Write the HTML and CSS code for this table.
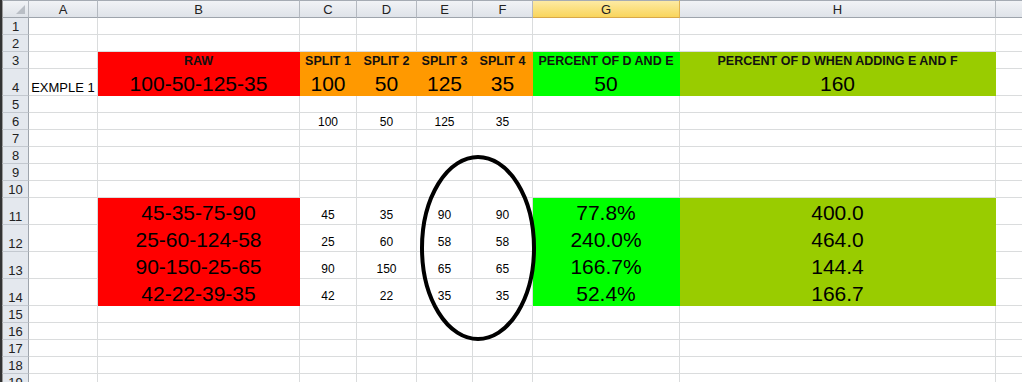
FILE: index.html
```html
<!DOCTYPE html>
<html lang="en">
<head>
  <meta charset="UTF-8">
  <title>Split values</title>
  <link rel="stylesheet" href="styles.css">
</head>
<body>

<div class="window">
  <div class="sheet">
    <!-- column headers -->
    <div class="corner"></div>
    <div class="ch">A</div><div class="ch">B</div><div class="ch">C</div><div class="ch">D</div><div class="ch">E</div><div class="ch">F</div><div class="ch sel">G</div><div class="ch">H</div><div class="ch"></div>

    <div class="rh">1</div>
    <div class="c"></div><div class="c"></div><div class="c"></div><div class="c"></div><div class="c"></div><div class="c"></div><div class="c"></div><div class="c"></div><div class="c"></div>

    <div class="rh">2</div>
    <div class="c"></div><div class="c"></div><div class="c"></div><div class="c"></div><div class="c"></div><div class="c"></div><div class="c"></div><div class="c"></div><div class="c"></div>

    <div class="rh">3</div>
    <div class="c"></div>
    <div class="c red head">RAW</div>
    <div class="c orange head">SPLIT 1</div>
    <div class="c orange head">SPLIT 2</div>
    <div class="c orange head">SPLIT 3</div>
    <div class="c orange head">SPLIT 4</div>
    <div class="c lime head">PERCENT OF D AND E</div>
    <div class="c olive head">PERCENT OF D WHEN ADDING E AND F</div>
    <div class="c"></div>

    <div class="rh">4</div>
    <div class="c label">EXMPLE 1</div>
    <div class="c red big">100-50-125-35</div>
    <div class="c orange big">100</div>
    <div class="c orange big">50</div>
    <div class="c orange big">125</div>
    <div class="c orange big">35</div>
    <div class="c lime big">50</div>
    <div class="c olive big">160</div>
    <div class="c"></div>

    <div class="rh">5</div>
    <div class="c"></div><div class="c"></div><div class="c"></div><div class="c"></div><div class="c"></div><div class="c"></div><div class="c"></div><div class="c"></div><div class="c"></div>

    <div class="rh">6</div>
    <div class="c"></div><div class="c"></div>
    <div class="c">100</div><div class="c">50</div><div class="c">125</div><div class="c">35</div>
    <div class="c"></div><div class="c"></div><div class="c"></div>

    <div class="rh">7</div>
    <div class="c"></div><div class="c"></div><div class="c"></div><div class="c"></div><div class="c"></div><div class="c"></div><div class="c"></div><div class="c"></div><div class="c"></div>

    <div class="rh">8</div>
    <div class="c"></div><div class="c"></div><div class="c"></div><div class="c"></div><div class="c"></div><div class="c"></div><div class="c"></div><div class="c"></div><div class="c"></div>

    <div class="rh">9</div>
    <div class="c"></div><div class="c"></div><div class="c"></div><div class="c"></div><div class="c"></div><div class="c"></div><div class="c"></div><div class="c"></div><div class="c"></div>

    <div class="rh">10</div>
    <div class="c"></div><div class="c"></div><div class="c"></div><div class="c"></div><div class="c"></div><div class="c"></div><div class="c"></div><div class="c"></div><div class="c"></div>

    <div class="rh">11</div>
    <div class="c"></div>
    <div class="c red big">45-35-75-90</div>
    <div class="c num">45</div><div class="c num">35</div><div class="c num">90</div><div class="c num">90</div>
    <div class="c lime big">77.8%</div>
    <div class="c olive big">400.0</div>
    <div class="c"></div>

    <div class="rh">12</div>
    <div class="c"></div>
    <div class="c red big">25-60-124-58</div>
    <div class="c num">25</div><div class="c num">60</div><div class="c num">58</div><div class="c num">58</div>
    <div class="c lime big">240.0%</div>
    <div class="c olive big">464.0</div>
    <div class="c"></div>

    <div class="rh">13</div>
    <div class="c"></div>
    <div class="c red big">90-150-25-65</div>
    <div class="c num">90</div><div class="c num">150</div><div class="c num">65</div><div class="c num">65</div>
    <div class="c lime big">166.7%</div>
    <div class="c olive big">144.4</div>
    <div class="c"></div>

    <div class="rh">14</div>
    <div class="c"></div>
    <div class="c red big">42-22-39-35</div>
    <div class="c num">42</div><div class="c num">22</div><div class="c num">35</div><div class="c num">35</div>
    <div class="c lime big">52.4%</div>
    <div class="c olive big">166.7</div>
    <div class="c"></div>

    <div class="rh">15</div>
    <div class="c"></div><div class="c"></div><div class="c"></div><div class="c"></div><div class="c"></div><div class="c"></div><div class="c"></div><div class="c"></div><div class="c"></div>

    <div class="rh">16</div>
    <div class="c"></div><div class="c"></div><div class="c"></div><div class="c"></div><div class="c"></div><div class="c"></div><div class="c"></div><div class="c"></div><div class="c"></div>

    <div class="rh">17</div>
    <div class="c"></div><div class="c"></div><div class="c"></div><div class="c"></div><div class="c"></div><div class="c"></div><div class="c"></div><div class="c"></div><div class="c"></div>

    <div class="rh">18</div>
    <div class="c"></div><div class="c"></div><div class="c"></div><div class="c"></div><div class="c"></div><div class="c"></div><div class="c"></div><div class="c"></div><div class="c"></div>

    <div class="rh">19</div>
    <div class="c"></div><div class="c"></div><div class="c"></div><div class="c"></div><div class="c"></div><div class="c"></div><div class="c"></div><div class="c"></div><div class="c"></div>
  </div>

  <!-- hand-drawn ring around split 3 / split 4 -->
  <svg class="ring" width="1022" height="382" viewBox="0 0 1022 382">
    <ellipse cx="478" cy="248" rx="56" ry="91" fill="none" stroke="#000" stroke-width="4"/>
  </svg>
</div>

</body>
</html>
```

FILE: styles.css
```css
* {
  box-sizing: border-box;
}
body {
  margin: 0;
  background: #fff;
  font-family: 'Liberation Sans', Arial, sans-serif;
  overflow: hidden;
}
.window {
  position: relative;
  width: 1022px;
  height: 382px;
  overflow: hidden;
}
.sheet {
  display: grid;
  grid-template-columns: 27px 69px 202px 57px 60px 56px 60px 147px 316px 60px;
  grid-template-rows: 18px 17px 17px 17px 27px 17px 17px 17px 17px 17px 17px 27px 27px 27px 27px 17px 17px 17px 17px 17px;
  width: max-content;
  border-left: 2px solid #333;
}
.ring {
  position: absolute;
  top: 0;
  left: 0;
  pointer-events: none;
}

/* headers */
.corner,
.ch {
  background: linear-gradient(#f1f3f6, #dfe3e9);
  border-top: 1px solid #a5abb3;
  border-right: 1px solid #b4b9c0;
  border-bottom: 1px solid #9ea4ac;
}
.corner {
  border-left: 1px solid #9a9a9a;
  display: flex;
  justify-content: flex-end;
  align-items: flex-end;
  padding: 0 3px 3px 0;
}
.corner::after {
  content: '';
  width: 9px;
  height: 9px;
  background: #b9bec5;
  clip-path: polygon(100% 0, 100% 100%, 0 100%);
}
.ch {
  display: flex;
  justify-content: center;
  align-items: flex-end;
  padding-bottom: 1px;
  font-size: 13px;
  line-height: 1;
  color: #222;
}
.ch.sel {
  background: linear-gradient(#fdeaa3, #f9d55c);
  border-right-color: #e2b453;
  border-bottom-color: #d8a84a;
}
.rh {
  background: #e4e8ee;
  border-left: 1px solid #9a9a9a;
  border-right: 1px solid #9ea4ac;
  border-bottom: 1px solid #c3c8cf;
  display: flex;
  justify-content: center;
  align-items: flex-end;
  padding-bottom: 1px;
  font-size: 13px;
  line-height: 1;
  color: #222;
}

/* cells */
.c {
  border-right: 1px solid #dadcdd;
  border-bottom: 1px solid #dadcdd;
  display: flex;
  justify-content: center;
  align-items: flex-end;
  padding-bottom: 1px;
  font-size: 12px;
  line-height: 1;
  white-space: nowrap;
  color: #000;
}
.c.label {
  font-size: 13px;
}
.c.head {
  font-size: 12.5px;
  font-weight: bold;
  color: #111;
}
.c.big {
  font-size: 21px;
}
.c.num {
  padding-bottom: 3px;
}

/* fills */
.red {
  background: #ff0000;
  border-color: #ff0000;
}
.orange {
  background: #ff9900;
  border-color: #ff9900;
}
.lime {
  background: #00ff00;
  border-color: #00ff00;
}
.olive {
  background: #99cc00;
  border-color: #99cc00;
}
```
